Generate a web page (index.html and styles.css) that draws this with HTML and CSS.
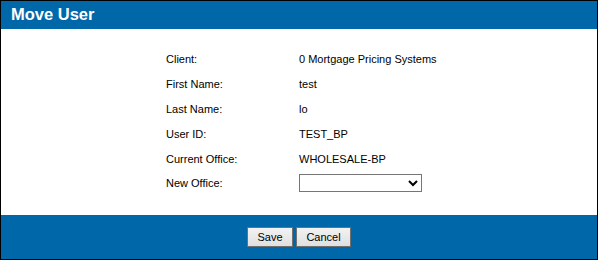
FILE: index.html
```html
<!DOCTYPE html>
<html lang="en">
<head>
    <meta charset="UTF-8">
    <title>Move User</title>
    <link rel="stylesheet" href="styles.css">
</head>
<body>
    <div class="dialog">
        <div class="dialog-header">Move User</div>
        <div class="dialog-body">
            <div class="field-grid">
                <div class="label">Client:</div>
                <div class="value">0 Mortgage Pricing Systems</div>
                <div class="label">First Name:</div>
                <div class="value">test</div>
                <div class="label">Last Name:</div>
                <div class="value">lo</div>
                <div class="label">User ID:</div>
                <div class="value">TEST_BP</div>
                <div class="label">Current Office:</div>
                <div class="value">WHOLESALE-BP</div>
                <div class="label">New Office:</div>
                <div class="value">
                    <select class="office-select">
                        <option></option>
                    </select>
                </div>
            </div>
        </div>
        <div class="dialog-footer">
            <button class="btn">Save</button>
            <button class="btn">Cancel</button>
        </div>
    </div>
</body>
</html>
```

FILE: styles.css
```css
body {
    margin: 0;
    font-family: "Liberation Sans", Arial, sans-serif;
    background-color: #ffffff;
}

.dialog {
    width: 596px;
    height: 258px;
    border: 1px solid #000;
    display: flex;
    flex-direction: column;
}

.dialog-header {
    height: 28px;
    background-color: #0067a8;
    color: #fff;
    font-size: 16.5px;
    font-weight: bold;
    line-height: 26px;
    padding-left: 10px;
}

.dialog-body {
    flex: 1;
    background-color: #fff;
    padding: 18px 0 0 165px;
}

.field-grid {
    display: grid;
    grid-template-columns: 133px auto;
    grid-auto-rows: 24.8px;
    align-items: center;
    font-size: 11px;
    color: #000;
}

.office-select {
    width: 123px;
    height: 18px;
    font-size: 11px;
    font-family: "Liberation Sans", Arial, sans-serif;
    border: 1px solid #767676;
    border-radius: 0;
    background-color: #fff;
    padding: 0;
}

.dialog-footer {
    height: 44px;
    background-color: #0067a8;
    display: flex;
    justify-content: center;
    align-items: center;
    gap: 3px;
}

.btn {
    height: 20px;
    padding: 0 6px;
    font-size: 11px;
    font-family: "Liberation Sans", Arial, sans-serif;
    color: #000;
    background: linear-gradient(#f2f2f2, #e0e0e0);
    border: 1px solid #707070;
    border-radius: 0;
}

.btn:first-child {
    width: 46px;
}

.btn:last-child {
    width: 55px;
}
```
